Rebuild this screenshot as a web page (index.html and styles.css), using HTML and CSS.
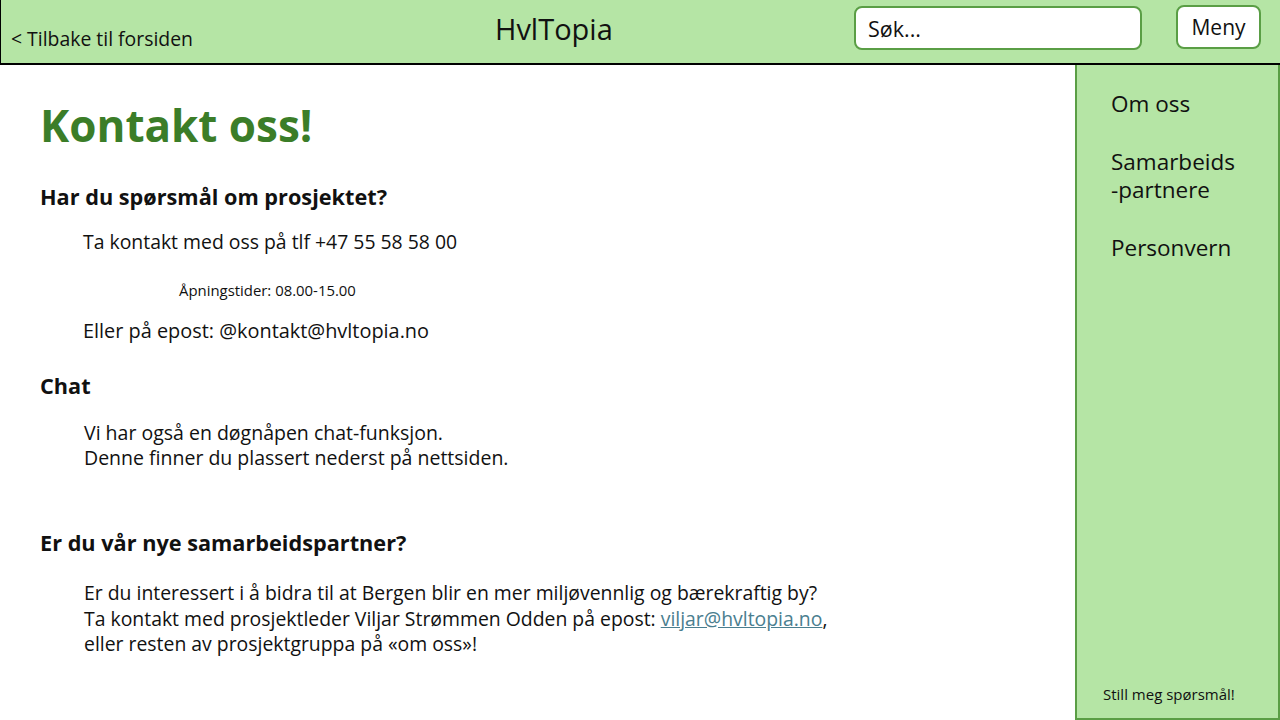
FILE: index.html
```html
<!DOCTYPE html>
<html lang="no">
<head>
<meta charset="utf-8">
<title>Kontakt oss – HvlTopia</title>
<link rel="stylesheet" href="styles.css">
</head>
<body>
<header class="topbar">
  <a class="back" href="#">&lt; Tilbake til forsiden</a>
  <div class="brand">HvlTopia</div>
  <div class="search">Søk...</div>
  <button class="menu-btn">Meny</button>
</header>
<div class="layout">
  <main class="content">
    <h1 class="title">Kontakt oss!</h1>
    <h2 class="sub">Har du spørsmål om prosjektet?</h2>
    <p class="line indent">Ta kontakt med oss på tlf +47 55 58 58 00</p>
    <p class="small">Åpningstider: 08.00-15.00</p>
    <p class="line indent wide">Eller på epost: @kontakt@hvltopia.no</p>
    <h2 class="sub chat">Chat</h2>
    <p class="para indent2">Vi har også en døgnåpen chat-funksjon.<br>Denne finner du plassert nederst på nettsiden.</p>
    <h2 class="sub partner">Er du vår nye samarbeidspartner?</h2>
    <p class="para indent2 last">Er du interessert i å bidra til at Bergen blir en mer miljøvennlig og bærekraftig by?<br>Ta kontakt med prosjektleder Viljar Strømmen Odden på epost: <a class="mail" href="#">viljar@hvltopia.no</a>,<br>eller resten av prosjektgruppa på «om oss»!</p>
  </main>
  <aside class="sidebar">
    <nav class="side-nav">
      <a href="#">Om oss</a>
      <a href="#">Samarbeids<br>-partnere</a>
      <a href="#">Personvern</a>
    </nav>
    <div class="ask">Still meg spørsmål!</div>
  </aside>
</div>
</body>
</html>
```
FILE: styles.css
```css
* { box-sizing: border-box; }
html, body { margin: 0; padding: 0; }
body {
  font-family: "Open Sans", "Noto Sans", sans-serif;
  color: #111;
  background: #fff;
  width: 1280px;
  height: 720px;
  overflow: hidden;
}
.topbar {
  height: 65px;
  background: #b5e5a5;
  border-left: 1px solid #000;
  border-bottom: 2px solid #000;
  display: grid;
  grid-template-columns: 480px 1fr 290px 116px;
  align-items: center;
  padding: 0 19px 0 10px;
}
.back {
  color: #111;
  text-decoration: none;
  font-size: 19.4px;
  align-self: end;
  padding-bottom: 11px;
}
.brand {
  font-size: 29px;
  justify-self: start;
  margin-left: 4px;
  margin-top: -7px;
}
.search {
  width: 288px;
  height: 44px;
  background: #fff;
  border: 2px solid #5a9e45;
  border-radius: 8px;
  font-size: 21.5px;
  padding: 6px 0 0 12px;
  margin-top: -8px;
  justify-self: end;
  margin-right: 3px;
}
.menu-btn {
  width: 85px;
  height: 44px;
  background: #fff;
  border: 2px solid #5a9e45;
  border-radius: 8px;
  font-family: inherit;
  font-size: 21px;
  color: #111;
  margin-top: -10px;
  justify-self: end;
  padding: 0;
}
.layout {
  display: flex;
  height: 655px;
}
.content {
  flex: 1;
  padding: 30px 0 0 40px;
}
.title {
  margin: 0;
  font-size: 44px;
  font-weight: 700;
  color: #3b7d28;
  line-height: 60px;
}
.sub {
  margin: 0;
  font-size: 21.7px;
  font-weight: 700;
  line-height: 28px;
}
.title + .sub { margin-top: 28px; }
.line {
  margin: 18px 0 0;
  font-size: 19.4px;
  line-height: 26px;
}
.line.wide { font-size: 19.9px; }
.indent { padding-left: 43px; }
.small {
  margin: 26px 0 0;
  padding-left: 139px;
  font-size: 14.9px;
  line-height: 18px;
}
.small + .line { margin-top: 19px; }
.chat { margin-top: 28px; }
.para {
  margin: 20px 0 0;
  font-size: 19.5px;
  line-height: 25px;
}
.indent2 { padding-left: 44px; }
.partner { margin-top: 59px; }
.para.last { margin-top: 23px; line-height: 25.5px; font-size: 19.4px; }
.mail { color: #4a7e8f; text-decoration: underline; }
.sidebar {
  width: 205px;
  background: #b5e5a5;
  border: 2px solid #5a9e45;
  border-top: none;
  display: flex;
  flex-direction: column;
  justify-content: space-between;
  padding: 25px 0 14px 34px;
}
.side-nav {
  display: flex;
  flex-direction: column;
  gap: 30px;
}
.side-nav a {
  color: #111;
  text-decoration: none;
  font-size: 22.5px;
  line-height: 28px;
}
.ask {
  font-size: 15px;
  margin-left: -8px;
}
```
